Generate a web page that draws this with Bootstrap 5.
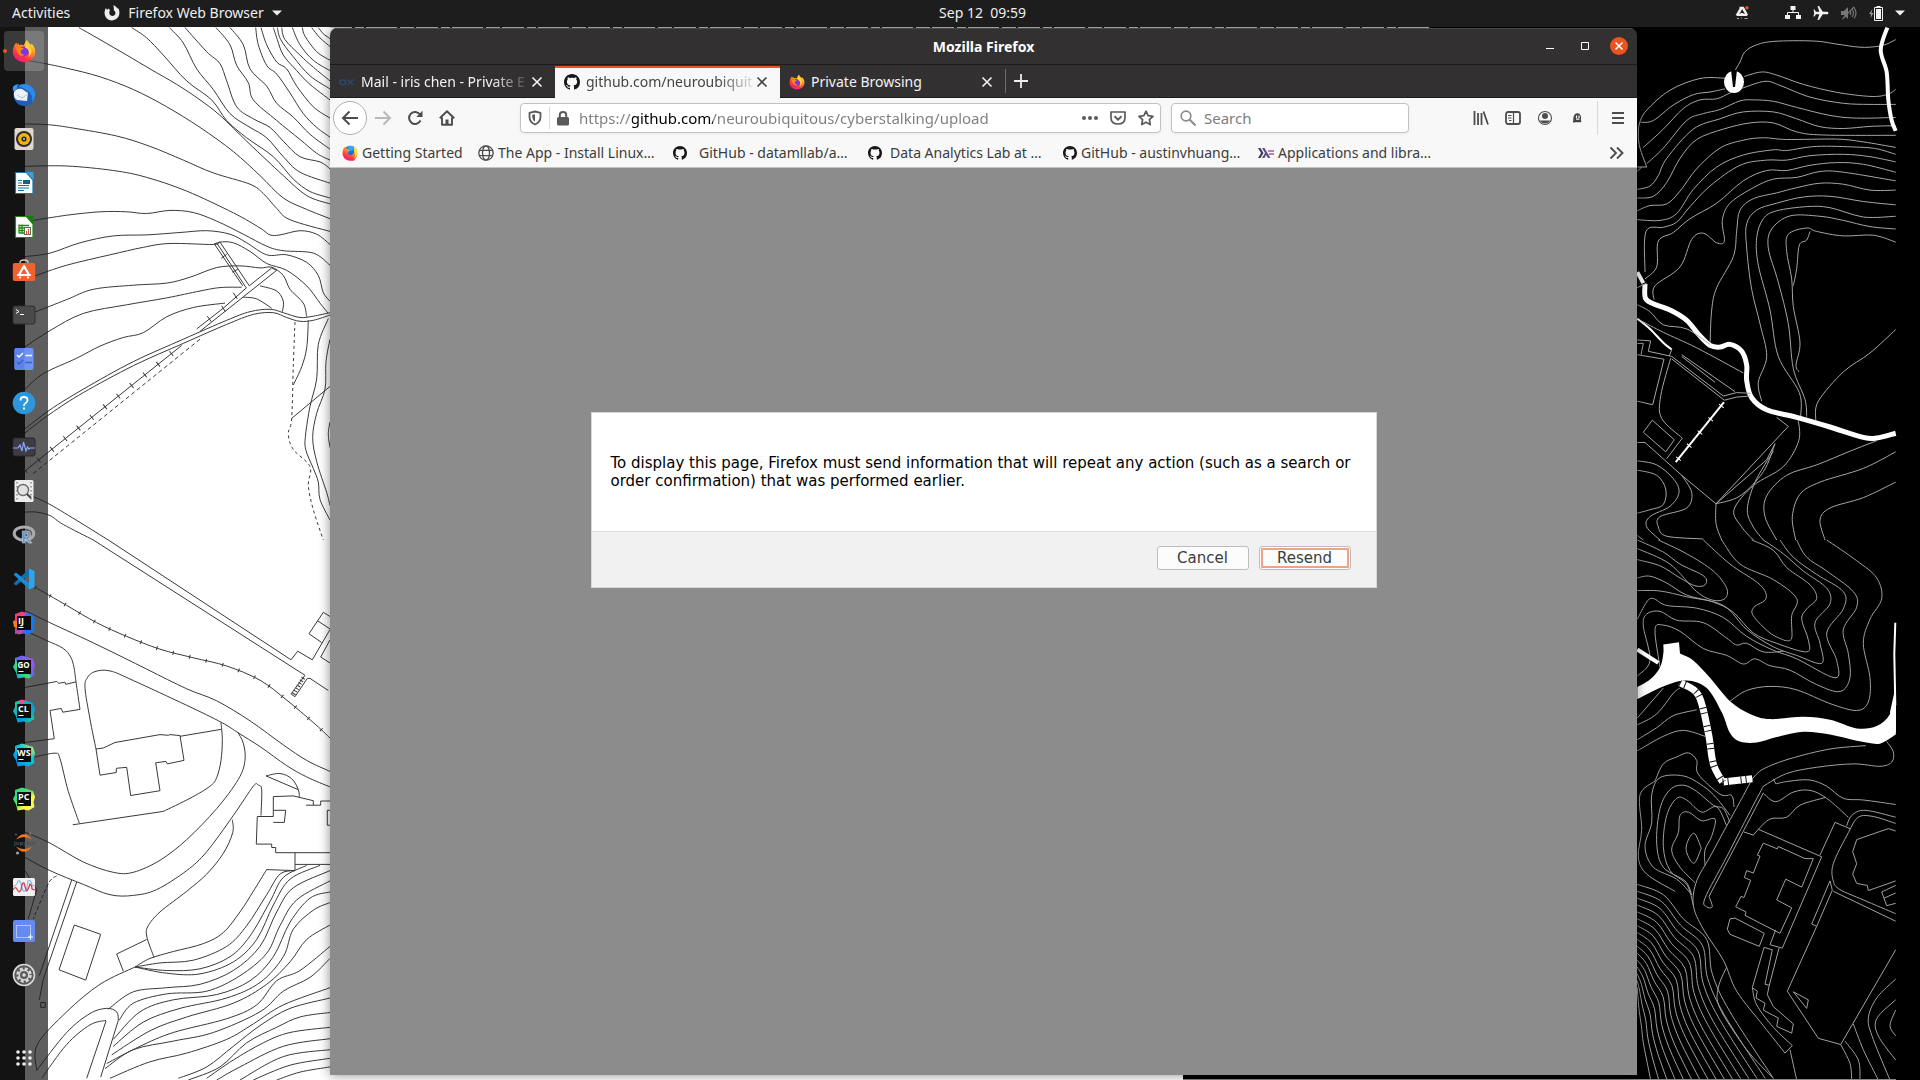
<!DOCTYPE html>
<html lang="en">
<head>
<meta charset="utf-8">
<meta name="viewport" content="width=device-width, initial-scale=1">
<title>Mozilla Firefox</title>
<link href="https://cdn.jsdelivr.net/npm/bootstrap@5.3.0/dist/css/bootstrap.min.css" rel="stylesheet">
<style>
:root{--ui:"Noto Sans","Open Sans",sans-serif}
body{font-family:var(--ui);font-size:14px;line-height:20px;background:#000;overflow:hidden}
button{font:inherit;color:inherit;border:0;background:none;padding:0}
svg{display:block;flex:none}
.wallpaper{inset:0;width:100%;height:100%}
.topbar{height:27px;background:#1d1d1d;color:#eee;z-index:2;padding-bottom:2px}
.topbar .side{flex:1 1 0}
.topbar .menus{padding-left:12px;gap:34px}
.topbar .clock{padding-left:48px}
.topbar .tray{gap:12px;padding-right:15px}
.dock{width:48px;background:rgba(27,27,27,.706);padding-top:2px}
.dock button{width:40px;height:40px;margin:2px 4px;border-radius:4px}
.dock svg{overflow:visible}
.dock .running{background:rgba(255,255,255,.17)}
.dock .running::before{content:"";position:absolute;left:-1px;top:18px;width:4px;height:4px;border-radius:50%;background:#e95420}
.win{margin:1px 283px 5px 282px;border-radius:7px 7px 0 0;box-shadow:0 0 12px rgba(0,0,0,.45);overflow:hidden;min-width:0}
.titlebar{height:37px;background:#333031;color:#fff;border-top:1px solid #4a4848;border-bottom:1px solid #1c1b1b}
.titlebar .caption{line-height:36px}
.titlebar .controls{right:9px;top:8px;gap:13px}
.tabstrip{height:33px;background:#333031;color:#f3f3f3}
.tab-item{width:225px;padding:1px 12px 0 9px;border-bottom:1px solid #1c1b1b}
.tab-item .label-text{white-space:nowrap;margin-left:6px}
.tab-item .fading{-webkit-mask-image:linear-gradient(90deg,#000 80%,rgba(0,0,0,.15));mask-image:linear-gradient(90deg,#000 80%,rgba(0,0,0,.15))}
.tab-item.current{background:#f8f8f8;color:#444;border-top:2px solid #e95420;border-bottom:0;padding-top:0;padding-bottom:2px;margin-top:1px}
.tab-rest{border-bottom:1px solid #1c1b1b}
.tab-rest .bar-sep{width:1px;height:24px;background:#6d6b6b}
.tab-rest button{margin-left:7px}
.toolbar{height:40px;background:#f8f8f8;color:#4d4d4d;padding:0 3px}
.tool{width:32px;height:32px;display:flex;align-items:center;justify-content:center}
.tool.back{width:34px;height:34px;border:1px solid #b0b0b0;border-radius:50%;background:#fff}
.field{height:30px;background:#fff;border:1px solid #c2c2c2;border-radius:4px;box-shadow:0 1px 3px rgba(0,0,0,.06)}
.field input{border:0;outline:0;padding:0;min-width:0;font-size:15px;line-height:24px;background-color:transparent}
.urlfield{margin-left:57px;padding:0 6px}
.urlfield input{margin-left:9px;color:transparent;background-image:linear-gradient(90deg,#7d7d7d 53px,#000 53px,#000 134px,#7d7d7d 134px);-webkit-background-clip:text;background-clip:text}
.searchfield{width:238px;margin:0 56px 0 10px;padding:0 8px}
.searchfield input::placeholder{color:#7d7d7d;opacity:1}
.tool-sep{width:1px;height:34px;background:#d8d8d8}
.urlfield .tool-sep{height:22px;margin:0 6px}
.bookmarks{height:30px;background:#f8f8f8;border-bottom:1px solid #c4c4c4;padding:0 12px}
.bookmarks a{width:195px;color:#3c3c3c;text-decoration:none;white-space:nowrap}
.bookmarks a.first-bm{width:136px}
.viewport{background:#8c8c8c}
.prompt{width:786px;margin-top:244px;background:#fff;border:1px solid #d5d8d5;font-family:"DejaVu Sans",sans-serif;font-size:15px;line-height:18px;color:#000}
.prompt p{padding:41px 19px;margin:0;border-bottom:1px solid #e2e2e2}
.prompt .actions{background:#f1f1f1;padding:14px 25px 17px;gap:10px}
.prompt button{width:92px;height:24px;border:1px solid #bdbdbd;border-radius:3px;background:#fcfcfc;color:#3c3c3c}
.prompt button.chosen{box-shadow:inset 0 0 0 1px #fff,inset 0 0 0 3px #f2a284}
svg text{font-family:"Open Sans",sans-serif;font-weight:700}
</style>
<script src="https://cdn.jsdelivr.net/npm/bootstrap@5.3.0/dist/js/bootstrap.bundle.min.js"></script>
</head>
<body class="vh-100 d-flex flex-column position-relative">

<svg width="0" height="0" class="position-absolute" aria-hidden="true">
<defs>
<linearGradient id="fxA" x1="0.8" y1="0" x2="0.2" y2="1"><stop offset="0" stop-color="#fff44f"/><stop offset=".35" stop-color="#ff9a1f"/><stop offset=".7" stop-color="#ff3647"/><stop offset="1" stop-color="#e31587"/></linearGradient>
<radialGradient id="fxB"><stop offset="0" stop-color="#6a3df5"/><stop offset="1" stop-color="#8b2fd6"/></radialGradient>
<linearGradient id="jbIJ" x1="0" y1="0" x2="1" y2=".2"><stop offset="0" stop-color="#fe315d"/><stop offset=".5" stop-color="#f0418c"/><stop offset=".62" stop-color="#3a6cf0"/><stop offset="1" stop-color="#087cfa"/></linearGradient>
<linearGradient id="jbGO" x1="0" y1="1" x2="1" y2="0"><stop offset="0" stop-color="#078efc"/><stop offset=".4" stop-color="#3bea62"/><stop offset=".5" stop-color="#5a6cf8"/><stop offset="1" stop-color="#b74af7"/></linearGradient>
<linearGradient id="jbCL" x1="0" y1="0" x2="1" y2="1"><stop offset="0" stop-color="#21d789"/><stop offset=".6" stop-color="#009ae5"/><stop offset="1" stop-color="#21d789"/></linearGradient>
<linearGradient id="jbWS" x1="0" y1="1" x2="1" y2="0"><stop offset="0" stop-color="#087cfa"/><stop offset=".6" stop-color="#00cdd7"/><stop offset="1" stop-color="#fcf84a"/></linearGradient>
<linearGradient id="jbPC" x1="0" y1="0" x2="1" y2="1"><stop offset="0" stop-color="#21d789"/><stop offset=".5" stop-color="#5be06a"/><stop offset=".65" stop-color="#fcf84a"/><stop offset="1" stop-color="#fcf84a"/></linearGradient>
<symbol id="firefox" viewBox="0 0 24 24"><path fill="url(#fxA)" d="M12 23.2C5.600 23.200.8 18.500.8 12.600.8 8.800 2.400 5.800 4.300 3.600L5.100 6.100 6 3.900 7.500 6.300C8.800 5.700 10.500 5.700 11.500 6.400 12.800 4.600 13.400 2.600 15 .8 15.400 3 17.600 4.400 19 6L19.700 4.800C22 7 23.200 9.800 23.200 12.800 23 18.800 18.200 23.200 12 23.200z"/><circle cx="11.800" cy="12.400" r="5" fill="url(#fxB)"/><path fill="#ff8a16" d="M4.500 8.500C7 7.500 9.500 8.800 11.800 9.200 11 10.800 9 10.400 8.600 12 8.400 14.400 10.500 16 13 15.600 10 18.500 4.500 16 4.500 8.500z"/><path fill="#ffd43a" d="M14.500 3C16 6 19.500 8 19.500 12.500 19.500 15 18 17 16.500 18 18 14 17 10 13 8.500z"/></symbol>
<symbol id="firefox-old" viewBox="0 0 24 24"><circle cx="12.500" cy="11" r="10" fill="#1c6fd8"/><path fill="#2fa8f5" d="M8 2.500Q14-.5 19 4l-4 5-6-2z"/><path fill="url(#fxA)" d="M12 23.500C5.500 23.500.8 18.500.8 12.500.8 8 2 4.500 4 2.500L5 5.500Q8 5 9.500 7L12.500 8 9.500 10.500Q8 13 10.500 14.800 13.500 16.500 16.500 14 18.500 12 18 8.500 19 5 17.500 2.500 23.500 6 23.200 12.800 22.800 19 18 23.500 12 23.500z"/><path fill="#ffe23a" d="M17.500 2.500Q24 7 22.800 14 21.500 18 18.500 19.500 21 13 18 8.500 19 5 17.500 2.500z"/></symbol>
<symbol id="github" viewBox="0 0 16 16"><path fill="#191717" d="M8 0C3.58 0 0 3.58 0 8c0 3.540 2.290 6.530 5.470 7.590.4.070.55-.170.55-.380 0-.190-.010-.820-.010-1.490-2.010.370-2.530-.490-2.690-.940-.090-.230-.480-.940-.820-1.130-.280-.150-.680-.520-.010-.530.630-.010 1.080.580 1.230.820.720 1.210 1.870.870 2.330.660.070-.520.280-.870.510-1.070-1.780-.2-3.640-.890-3.640-3.950 0-.870.310-1.590.820-2.150-.080-.2-.360-1.020.080-2.120 0 0 .670-.210 2.200.820.640-.180 1.320-.270 2-.270s1.360.090 2 .270c1.530-1.040 2.200-.820 2.200-.820.440 1.100.160 1.920.080 2.120.510.560.820 1.270.820 2.150 0 3.070-1.870 3.750-3.650 3.950.290.250.540.730.540 1.480 0 1.070-.010 1.930-.010 2.200 0 .210.150.460.550.380A8.010 8.010 0 0 0 16 8c0-4.420-3.580-8-8-8z"/></symbol>
<symbol id="cross" viewBox="0 0 12 12"><path d="M1.500 1.500l9 9M10.500 1.500l-9 9" stroke="currentColor" stroke-width="1.600" fill="none"/></symbol>
<symbol id="jbshape" viewBox="0 0 24 24"><path d="M3 3l7-2.500 5 1.500 6 2 2 6-1.500 5 1 5-6 3.500-5-1-6 1-1.500-6L1 12l2-4z"/></symbol>
</defs>
</svg>

<svg class="wallpaper position-absolute" viewBox="0 0 1920 1080" preserveAspectRatio="xMinYMin slice" aria-hidden="true">
<rect width="1920" height="1080" fill="#000"/>
<path d="M25 27H1400V500H1183V1080H25z" fill="#fff"/>
<g id="map" fill="none"></g>
<path d="M330 27.500H1430" stroke="#222"/>
<path d="M330 27.500H1430" stroke="#c8c8c8" stroke-dasharray="22 3 9 2 31 3 14 2"/>
<path d="M1183 1079.500H1896" stroke="#888"/>
</svg>

<header class="topbar d-flex align-items-center position-relative flex-shrink-0">
  <div class="side menus d-flex align-items-center">
    <button>Activities</button>
    <button class="d-flex align-items-center">
      <svg width="16" height="16" viewBox="0 0 16 16"><path fill="#eee" d="M2 3L3 5 4.500 3.500 6 5C5 6.500 5 9 6.500 10.200 8 11.500 10.500 11 11.300 9 11.800 7.500 11 6 10 5.500L9.500 0C11 .8 12.500 2 13.500 3.500L14.500 3.500C16 7 15.800 11 12.800 13.600 9.500 16.300 4.500 16 2 12.500 0 9.500.2 5.800 2 3z"/></svg>
      <span class="ms-2">Firefox Web Browser</span>
      <svg class="ms-2" width="10" height="6" viewBox="0 0 10 6"><path fill="#eee" d="M0 .5h10L5 5.500z"/></svg>
    </button>
  </div>
  <button class="clock">Sep 12&nbsp; 09:59</button>
  <div class="side tray d-flex align-items-center justify-content-end">
    <svg class="me-4" width="14" height="14" viewBox="0 0 14 14"><path d="M4.500 2h3.500l3.500 6.500M6 2.500L2 9.500" stroke="#eee" stroke-width="2.600" fill="none"/><path d="M.5 8h4l1.500-1h2l1 1h4l-1 2H2z" fill="#eee"/><path d="M2 12.500h2M6 12h1M9.500 12.500h3" stroke="#aaa"/><circle cx="12" cy="1.800" r="1.700" fill="#e95420"/></svg>
    <svg width="16" height="14" viewBox="0 0 16 14"><g fill="#f2f2f2"><rect x="5.500" y="0" width="5" height="4"/><rect x="0" y="9" width="5" height="4"/><rect x="11" y="9" width="5" height="4"/></g><path d="M8 4v3M2.500 9V6.500h11V9" stroke="#f2f2f2" fill="none"/></svg>
    <svg width="16" height="16" viewBox="0 0 16 16"><path fill="#f2f2f2" d="M15.500 8c0-.8-1-1.300-2-1.300H9.800L6 1H4.500l1.800 5.700H3L1.500 4.500H.5L1.200 8 .5 11.500h1L3 9.300h3.300L4.500 15H6l3.800-5.700h3.700c1 0 2-.5 2-1.300z"/></svg>
    <svg width="16" height="14" viewBox="0 0 16 14"><path fill="#777" d="M0 5h3l4-4v12L3 9H0z"/><path d="M9 5q1.500 2 0 4M11 3q3 4 0 8M13 1.500q4 5.500 0 11M1.500 13L13 .8" stroke="#777" stroke-width="1.200" fill="none"/></svg>
    <svg width="14" height="16" viewBox="0 0 14 16"><path fill="#999" d="M3.500 4L0 9h2l-.5 4L4.500 8h-2z"/><path d="M5.500 2.500h8v13h-8z" fill="none" stroke="#f2f2f2"/><path fill="#f2f2f2" d="M7.500 1h4v1h-4zM7 4h5v10H7z"/></svg>
    <svg width="10" height="6" viewBox="0 0 10 6"><path fill="#f2f2f2" d="M0 .5h10L5 5.500z"/></svg>
  </div>
</header>

<main class="d-flex flex-grow-1 position-relative">
  <nav class="dock d-flex flex-column flex-shrink-0" aria-label="Dock" id="dock">
    <button class="running position-relative d-flex align-items-center justify-content-center" aria-label="Firefox"><svg width="24" height="24"><use href="#firefox"/></svg></button>
    <button class="d-flex align-items-center justify-content-center" aria-label="Thunderbird"><svg width="24" height="24" viewBox="0 0 24 24"><circle cx="12.500" cy="12" r="11" fill="#1f5fb8"/><path d="M6 3Q14-2 21 5 26 12 20 20 22 12 16 8 10 4 6 3z" fill="#2f8be8"/><path d="M2 9Q5 5 10 6L16 10 15 18 5 17Q1 14 2 9z" fill="#eef2f7"/><path d="M5 12l5 3 6-4" stroke="#b9c3cf" fill="none"/><path d="M1 8Q-1 2 7 1 4 4 5 7z" fill="#3d9bea"/></svg></button>
    <button class="d-flex align-items-center justify-content-center" aria-label="Rhythmbox"><svg width="24" height="24" viewBox="0 0 24 24"><rect x="2.500" y="1" width="19" height="22" rx="2" fill="#e0d8cf"/><circle cx="12" cy="12" r="8" fill="#2a2a2a"/><circle cx="12" cy="12" r="6" fill="#f2b211"/><circle cx="12" cy="12" r="2.600" fill="#2a2a2a"/><circle cx="12" cy="12" r="1" fill="#ccc"/></svg></button>
    <button class="d-flex align-items-center justify-content-center" aria-label="Writer"><svg width="24" height="24" viewBox="0 0 24 24"><path d="M3.500 1.500h11L21 9v13.500H3.500z" fill="#fff" stroke="#1278ad" stroke-width="1.200"/><path d="M14.500 1h7v8z" fill="#3aa0dc"/><path d="M6 9.500h4M6 12h4M6 14.500h11M6 17h11M6 19.500h6" stroke="#1278ad" stroke-width="1.200"/><rect x="11" y="9" width="7" height="4" fill="#1b5e86"/></svg></button>
    <button class="d-flex align-items-center justify-content-center" aria-label="Calc"><svg width="24" height="24" viewBox="0 0 24 24"><path d="M3.500 1.500h11L21 9v13.500H3.500z" fill="#fff" stroke="#1c8a10" stroke-width="1.200"/><path d="M14.500 1h7v8z" fill="#167a0b"/><path d="M7 10.500h10M7 13h6M7 15.500h6M7 18h6M7 9.500v9M10 9.500v9" stroke="#1c8a10" stroke-width="1.300"/><rect x="12.500" y="12.500" width="6" height="7" fill="#fff" stroke="#666"/><path d="M14.500 19v-3M16.500 19v-5" stroke="#c53"/></svg></button>
    <button class="d-flex align-items-center justify-content-center" aria-label="Software"><svg width="24" height="24" viewBox="0 0 24 24"><path d="M8 5V3.500Q8 1 12 1t4 2.500V5" stroke="#e0c8b8" fill="none" stroke-width="1.300"/><rect x=".8" y="4" width="22.400" height="18" rx="2" fill="#ef6230"/><path d="M12 7L7.500 15M12 7l4.500 8M6 16h12M8 18.500h0M16 18.500h0" stroke="#fff" stroke-width="2.200" stroke-linecap="round" fill="none"/></svg></button>
    <button class="d-flex align-items-center justify-content-center" aria-label="Terminal"><svg width="24" height="24" viewBox="0 0 24 24"><rect x="1" y="3" width="22" height="18" rx="2" fill="#4a4a4a" stroke="#2e2e2e"/><path d="M4 6.500l3 2-3 2M8 11.500h4" stroke="#fff" fill="none"/></svg></button>
    <button class="d-flex align-items-center justify-content-center" aria-label="To Do"><svg width="24" height="24" viewBox="0 0 24 24"><rect x="2.500" y="1" width="19" height="22" rx="2" fill="#6f93f5"/><path d="M2.500 12V3q0-2 2-2h8v22h-8q-2 0-2-2z" fill="#5d82ee"/><path d="M5 8l2 2 4-4M13.500 8.500H20" stroke="#fff" stroke-width="1.400" fill="none"/><path d="M5 15l2 2 4-4M13.500 15.500H20" stroke="#3d5fb5" stroke-width="1.400" fill="none"/></svg></button>
    <button class="d-flex align-items-center justify-content-center" aria-label="Help"><svg width="24" height="24" viewBox="0 0 24 24"><circle cx="12" cy="12" r="11.300" fill="#2e97dc"/><path d="M8.500 9.500Q8.500 6 12 6t3.500 3.300Q15.500 11 13.500 12.200 12 13 12 15M12 16.500v2" stroke="#fff" stroke-width="1.800" fill="none"/></svg></button>
    <button class="d-flex align-items-center justify-content-center" aria-label="System Monitor"><svg width="24" height="24" viewBox="0 0 24 24"><rect x="1" y="3" width="22" height="18" rx="2" fill="#3c3d42" stroke="#26272b"/><path d="M1 13h5l2-3 2 6 1.500-9 2.500 9 1.500-4 1.500 2 1-1h5" stroke="#8fa7f5" stroke-width="1.200" fill="none"/></svg></button>
    <button class="d-flex align-items-center justify-content-center" aria-label="Document Viewer"><svg width="24" height="24" viewBox="0 0 24 24"><rect x="2.500" y="1" width="19" height="22" rx="1.500" fill="#ececec"/><path d="M5 3v18M19 3v18" stroke="#888" stroke-width="1.500" stroke-dasharray="1.500 2.500"/><circle cx="11" cy="11" r="5.500" fill="#e2e2e2" stroke="#6b6b6b" stroke-width="1.400"/><path d="M15 15l4 4" stroke="#444" stroke-width="2"/></svg></button>
    <button class="d-flex align-items-center justify-content-center" aria-label="R"><svg width="24" height="24" viewBox="0 0 24 24"><ellipse cx="12" cy="10.500" rx="9.800" ry="6.600" fill="none" stroke="#a9abae" stroke-width="3"/><text x="9" y="20" font-size="16" fill="#6688b8" stroke="#d5dbe5" stroke-width=".6">R</text></svg></button>
    <button class="d-flex align-items-center justify-content-center" aria-label="Visual Studio Code"><svg width="24" height="24" viewBox="0 0 24 24"><path d="M17 1.500l5.500 2.500v16L17 22.500z" fill="#2aa5f0"/><path d="M1.500 16.500L17 2v6L4 18.500z" fill="#0f6fb5"/><path d="M1.500 7.500L17 22v-6L4 5.500z" fill="#1a8ad6"/></svg></button>
    <button class="d-flex align-items-center justify-content-center" aria-label="IntelliJ IDEA"><svg width="24" height="24" viewBox="0 0 24 24"><use href="#jbshape" width="24" height="24" fill="url(#jbIJ)"/><path d="M1 10l4 0v7l-3-1z" fill="#f97a12"/><path d="M3 17h5v5l-5 1z" fill="#a0539a"/><rect x="5" y="5" width="14" height="14" fill="#0b0b0b"/><text x="6" y="13" font-size="9" fill="#fff">IJ</text><path d="M6.500 16.500h5" stroke="#fff"/></svg></button>
    <button class="d-flex align-items-center justify-content-center" aria-label="GoLand"><svg width="24" height="24" viewBox="0 0 24 24"><use href="#jbshape" width="24" height="24" fill="url(#jbGO)"/><rect x="5" y="5" width="14" height="14" fill="#0b0b0b"/><text x="5.500" y="13" font-size="8" fill="#fff">GO</text><path d="M6.500 16.500h5" stroke="#fff"/></svg></button>
    <button class="d-flex align-items-center justify-content-center" aria-label="CLion"><svg width="24" height="24" viewBox="0 0 24 24"><use href="#jbshape" width="24" height="24" fill="url(#jbCL)"/><path d="M8 1l5 0-2 4H8z" fill="#e0548f"/><rect x="5" y="5" width="14" height="14" fill="#0b0b0b"/><text x="6" y="13" font-size="9" fill="#fff">CL</text><path d="M6.500 16.500h5" stroke="#fff"/></svg></button>
    <button class="d-flex align-items-center justify-content-center" aria-label="WebStorm"><svg width="24" height="24" viewBox="0 0 24 24"><use href="#jbshape" width="24" height="24" fill="url(#jbWS)"/><rect x="5" y="5" width="14" height="14" fill="#0b0b0b"/><text x="5" y="13" font-size="9" fill="#fff">WS</text><path d="M6.500 16.500h5" stroke="#fff"/></svg></button>
    <button class="d-flex align-items-center justify-content-center" aria-label="PyCharm"><svg width="24" height="24" viewBox="0 0 24 24"><use href="#jbshape" width="24" height="24" fill="url(#jbPC)"/><rect x="5" y="5" width="14" height="14" fill="#0b0b0b"/><text x="6" y="13" font-size="9" fill="#fff">PC</text><path d="M6.500 16.500h5" stroke="#fff"/></svg></button>
    <button class="d-flex align-items-center justify-content-center" aria-label="Jupyter"><svg width="24" height="24" viewBox="0 0 24 24"><path d="M4 8.500Q12-2 20 8.500 12 3.500 4 8.500zM4 15.500Q12 26 20 15.500 12 20.500 4 15.500z" fill="#f37726"/><text x="2" y="14" font-size="6" fill="#4e4e4e">jupyter</text><circle cx="5.500" cy="22" r="1.600" fill="#9e9e9e"/><circle cx="18.500" cy="2.500" r="1.200" fill="#767677"/><circle cx="4" cy="3.500" r=".9" fill="#616262"/></svg></button>
    <button class="d-flex align-items-center justify-content-center" aria-label="Plotter"><svg width="24" height="24" viewBox="0 0 24 24"><rect x="1" y="3" width="22" height="18" rx="1.500" fill="#f0f0f0"/><path d="M1 11q4 0 5-5 2-1 3 3 2 9 4 7 2-2 3-10 3-2 4 4l3 1" stroke="#85b8e0" stroke-width="1.200" fill="none"/><path d="M1 15q2-4 4-1 2 5 4 1 1-8 3-7 2 8 3 8 2-3 3-7 2 1 2 5l3 1" stroke="#d0344e" stroke-width="1.200" fill="none"/></svg></button>
    <button class="d-flex align-items-center justify-content-center" aria-label="Screenshot"><svg width="24" height="24" viewBox="0 0 24 24"><rect x="1" y="1" width="22" height="22" rx="2" fill="#668bf0"/><path d="M4.500 6.500h14v12h-14z" fill="none" stroke="#fff" stroke-dasharray="1 1"/><path d="M18.500 15.500v5M16 18h5" stroke="#fff" stroke-width="1.200"/></svg></button>
    <button class="d-flex align-items-center justify-content-center" aria-label="Settings"><svg width="24" height="24" viewBox="0 0 24 24"><circle cx="12" cy="12" r="10.500" fill="#5c5c5c" stroke="#d8d8d8" stroke-width="1.600"/><circle cx="12" cy="12" r="6.500" fill="none" stroke="#d8d8d8" stroke-width="2.500" stroke-dasharray="3 2.100"/><circle cx="12" cy="12" r="4.800" fill="none" stroke="#d8d8d8" stroke-width="1.500"/><circle cx="12" cy="12" r="1.800" fill="#d8d8d8"/></svg></button>
    <button class="d-flex align-items-center justify-content-center mt-auto" aria-label="Show Applications"><svg width="16" height="16" viewBox="0 0 16 16"><g fill="#eee"><circle cx="2" cy="2" r="1.800"/><circle cx="8" cy="2" r="1.800"/><circle cx="14" cy="2" r="1.800"/><circle cx="2" cy="8" r="1.800"/><circle cx="8" cy="8" r="1.800"/><circle cx="14" cy="8" r="1.800"/><circle cx="2" cy="14" r="1.800"/><circle cx="8" cy="14" r="1.800"/><circle cx="14" cy="14" r="1.800"/></g></svg></button>
  </nav>

  <section class="win d-flex flex-column flex-grow-1">
    <div class="titlebar position-relative text-center flex-shrink-0">
      <div class="caption fw-bold">Mozilla Firefox</div>
      <div class="controls position-absolute d-flex">
        <button aria-label="Minimize"><svg width="22" height="18" viewBox="0 0 22 18"><path d="M6 11.500h8" stroke="#fff"/></svg></button>
        <button aria-label="Maximize"><svg width="22" height="18" viewBox="0 0 22 18"><path d="M6.500 5.500h7v7h-7z" stroke="#fff" fill="none"/></svg></button>
        <button aria-label="Close"><svg width="18" height="18" viewBox="0 0 18 18"><circle cx="9" cy="9" r="9" fill="#e95420"/><path d="M5.500 5.500l7 7M12.500 5.500l-7 7" stroke="#fff" stroke-width="1.500"/></svg></button>
      </div>
    </div>

    <div class="tabstrip d-flex flex-shrink-0">
      <div class="tab-item d-flex align-items-center justify-content-between">
        <svg width="16" height="16" viewBox="0 0 16 16"><rect x="1" y="6" width="5.500" height="4.500" rx="1.500" fill="none" stroke="#284b73" stroke-width="1.400"/><path d="M8.500 5.500l6 5.500M14.500 5.500l-6 5.500" stroke="#284b73" stroke-width="1.400"/></svg>
        <span class="label-text fading me-auto">Mail - iris chen - Private E</span>
        <button aria-label="Close tab"><svg width="12" height="12"><use href="#cross"/></svg></button>
      </div>
      <div class="tab-item current d-flex align-items-center justify-content-between">
        <svg width="16" height="16"><use href="#github"/></svg>
        <span class="label-text fading me-auto">github.com/neuroubiquit</span>
        <button aria-label="Close tab"><svg width="12" height="12"><use href="#cross"/></svg></button>
      </div>
      <div class="tab-item d-flex align-items-center justify-content-between">
        <svg width="16" height="16"><use href="#firefox"/></svg>
        <span class="label-text me-auto">Private Browsing</span>
        <button aria-label="Close tab"><svg width="12" height="12"><use href="#cross"/></svg></button>
      </div>
      <div class="tab-rest d-flex align-items-center flex-grow-1">
        <span class="bar-sep"></span>
        <button aria-label="New tab"><svg width="16" height="16" viewBox="0 0 16 16"><path d="M8 1v14M1 8h14" stroke="#eee" stroke-width="1.800"/></svg></button>
      </div>
    </div>

    <div class="toolbar d-flex align-items-center flex-shrink-0">
      <button class="tool back" aria-label="Back"><svg width="18" height="16" viewBox="0 0 18 16"><path d="M17 8H2.500M8.500 1.500L2 8l6.500 6.500" stroke="currentColor" stroke-width="2" fill="none"/></svg></button>
      <button class="tool" aria-label="Forward"><svg width="18" height="16" viewBox="0 0 18 16"><path d="M1 8h14.500M9.500 1.500L16 8l-6.500 6.500" stroke="#b8b8b8" stroke-width="2" fill="none"/></svg></button>
      <button class="tool" aria-label="Reload"><svg width="16" height="16" viewBox="0 0 16 16"><path d="M13.500 10.500A6 6 0 1 1 13 4.500" stroke="currentColor" stroke-width="2" fill="none"/><path d="M15.500.8v6.200H9.300z" fill="currentColor"/></svg></button>
      <button class="tool" aria-label="Home"><svg width="16" height="16" viewBox="0 0 16 16"><path d="M.8 8.300L8 1.200l7.200 7.100M3 7.500V14.800h10V7.500" stroke="currentColor" stroke-width="1.900" fill="none" stroke-linejoin="round"/><path d="M6.500 15V9.500h3V15z" fill="currentColor"/></svg></button>
      <div class="field urlfield d-flex align-items-center flex-grow-1">
        <svg width="16" height="16" viewBox="0 0 16 16"><path d="M8 1.500L2.500 2.800V7q0 5 5.500 7.500Q13.500 12 13.500 7V2.800z" stroke="#5a5a5a" stroke-width="1.800" fill="none" stroke-linejoin="round"/><path d="M8 4.200v7.500Q5.500 10 5.200 7V4.800z" fill="#5a5a5a"/></svg>
        <span class="tool-sep"></span>
        <svg width="14" height="16" viewBox="0 0 14 16"><rect x="1" y="7" width="12" height="8.500" rx="1.500" fill="#5a5a5a"/><path d="M3.800 8V5q0-3 3.200-3t3.200 3v3" stroke="#5a5a5a" stroke-width="2" fill="none"/></svg>
        <input class="flex-grow-1" type="text" aria-label="Address" value="https://github.com/neuroubiquitous/cyberstalking/upload">
        <button aria-label="Page actions"><svg width="16" height="16" viewBox="0 0 16 16"><g fill="#5a5a5a"><circle cx="2" cy="8" r="2"/><circle cx="8" cy="8" r="2"/><circle cx="14" cy="8" r="2"/></g></svg></button>
        <button class="mx-2 px-1" aria-label="Pocket"><svg width="16" height="16" viewBox="0 0 16 16"><path d="M1 2h14v5.500Q15 14 8 14T1 7.500z" stroke="#5a5a5a" stroke-width="1.700" fill="none" stroke-linejoin="round"/><path d="M4.500 6.300L8 9.600l3.500-3.300" stroke="#5a5a5a" stroke-width="1.900" fill="none"/></svg></button>
        <button aria-label="Bookmark"><svg width="16" height="16" viewBox="0 0 16 16"><path d="M8 1.200l2.100 4.500 4.900.6-3.600 3.400.9 4.900L8 12.200l-4.300 2.400.9-4.900L1 6.300l4.900-.6z" stroke="#5a5a5a" stroke-width="1.700" fill="none" stroke-linejoin="round"/></svg></button>
      </div>
      <div class="field searchfield d-flex align-items-center">
        <svg width="16" height="16" viewBox="0 0 16 16"><circle cx="6" cy="6" r="4.800" stroke="#8a8a8a" stroke-width="1.700" fill="none"/><path d="M9.500 9.500l6 6" stroke="#8a8a8a" stroke-width="2"/></svg>
        <input class="flex-grow-1 ms-2" type="text" placeholder="Search" aria-label="Search">
      </div>
      <button class="tool" aria-label="Library"><svg width="16" height="16" viewBox="0 0 16 16"><path d="M1.500 1v14M5 3v12M8.500 3v12M10.500 1.500l4.500 13" stroke="currentColor" stroke-width="1.800"/></svg></button>
      <button class="tool" aria-label="Sidebars"><svg width="16" height="16" viewBox="0 0 16 16"><rect x="1" y="2" width="14" height="12" rx="2" stroke="currentColor" stroke-width="1.800" fill="none"/><path d="M8.500 2v12M3 5.500h3.500M3 8h3.500M4 10.500h2.500" stroke="currentColor" stroke-width="1.200"/></svg></button>
      <button class="tool" aria-label="Account"><svg width="16" height="16" viewBox="0 0 16 16"><circle cx="8" cy="8" r="6.500" stroke="currentColor" stroke-width="1.100" fill="none"/><circle cx="8" cy="6" r="3" fill="currentColor"/><path d="M3 10.500h10Q11.500 13.500 8 13.500T3 10.500z" fill="currentColor"/></svg></button>
      <button class="tool" aria-label="Ghostery"><svg width="16" height="16" viewBox="0 0 16 16"><path d="M4 12.500L4.500 7Q5.500 3 8.500 3.200T12 7l.2 5.500-2-.6-1.500.6-1.500-.6-1.500.6z" fill="#444"/><path d="M7.500 5.500v2.500M10 5.500v2.500M7 9.200h3.500" stroke="#f8f8f8" stroke-width="1.200"/></svg></button>
      <span class="tool-sep ms-1 me-1"></span>
      <button class="tool" aria-label="Menu"><svg width="12" height="14" viewBox="0 0 12 14"><path d="M0 2h12M0 7h12M0 12h12" stroke="currentColor" stroke-width="2"/></svg></button>
    </div>

    <div class="bookmarks d-flex align-items-center flex-shrink-0">
      <a class="first-bm d-flex align-items-center" href="#"><svg width="16" height="16"><use href="#firefox-old"/></svg><span class="ms-1">Getting Started</span></a>
      <a class="d-flex align-items-center" href="#"><svg width="16" height="16" viewBox="0 0 16 16"><g stroke="#4d4d4d" stroke-width="1.300" fill="none"><circle cx="8" cy="8" r="7.200"/><ellipse cx="8" cy="8" rx="3.500" ry="7.200"/><path d="M1.500 5.300h13M1.500 10.700h13"/></g></svg><span class="ms-1">The App - Install Linux…</span></a>
      <a class="d-flex align-items-center" href="#"><svg width="14" height="14"><use href="#github"/></svg><span class="ms-2 ps-1">GitHub - datamllab/a…</span></a>
      <a class="d-flex align-items-center" href="#"><svg width="14" height="14"><use href="#github"/></svg><span class="ms-2">Data Analytics Lab at …</span></a>
      <a class="d-flex align-items-center" href="#"><svg width="14" height="14"><use href="#github"/></svg><span class="ms-1">GitHub - austinvhuang…</span></a>
      <a class="d-flex align-items-center" href="#"><svg width="16" height="12" viewBox="0 0 16 12"><path d="M0 1h2.500l3 5-3 5H0l3-5z" fill="#453a62"/><path d="M4 1h2.500l6 10H10L8 8l-1.500 3H4l3-5z" fill="#5e5086"/><path d="M10 4h6M11 7h5" stroke="#a65a9a" stroke-width="1.500"/></svg><span class="ms-1">Applications and libra…</span></a>
      <button class="ms-auto" aria-label="More bookmarks"><svg width="16" height="14" viewBox="0 0 16 14"><path d="M1.500 1.500L7 7l-5.500 5.500M8 1.500L13.500 7 8 12.500" stroke="#4d4d4d" stroke-width="1.900" fill="none"/></svg></button>
    </div>

    <div class="viewport flex-grow-1 d-flex justify-content-center align-items-start">
      <div class="prompt" role="dialog" aria-label="Resend information">
        <p>To display this page, Firefox must send information that will repeat any action (such as a search or order confirmation) that was performed earlier.</p>
        <div class="actions d-flex justify-content-end">
          <button type="button">Cancel</button>
          <button type="button" class="chosen">Resend</button>
        </div>
      </div>
    </div>
  </section>
</main>

<script>
// Contour map wallpaper. Each sheet lists its lines as points; "s" = smooth curve, "l" = straight segments.
// Optional third field: stroke width, fourth: dash pattern.
const sheets = [
 {x:0, y:0, ink:'#3a3a3a', lines:`
s|75,176 110,180 200,198 300,223 400,260 500,310 600,370 700,440 780,510 850,575 920,608 990,635
s|237,80 300,115 380,160 450,200 530,245 600,290 660,335 740,410 800,465 850,510 920,568 990,592
s|395,80 440,110 490,160 560,235 635,290 680,350 740,400 820,455 880,520 930,556 990,575
s|508,80 550,125 590,200 640,260 690,330 750,370 800,400 850,455 900,500 990,532
s|555,80 620,150 660,185 680,235 710,310 760,345 810,370 850,410 900,455 960,470 990,490
s|648,80 690,130 710,190 745,240 760,290 830,350 900,405 950,445 990,465
s|690,80 730,130 750,200 800,250 830,300 880,340 930,390 990,433
s|767,80 775,130 800,190 830,215 870,270 910,330 950,370 990,398
s|783,80 800,130 830,180 860,200 890,250 940,310 990,343
s|820,80 832,115 850,160 890,205 930,245 990,290
s|832,80 842,115 880,165 930,220 990,258
s|845,80 855,115 900,160 940,195 990,235
s|877,80 900,130 940,175 990,205
s|907,80 915,105 950,150 990,175
s|935,80 960,110 990,135
s|955,80 970,98 990,112
s|75,360 145,362 220,372 350,395 450,425 550,465 640,502 750,535 790,562 830,605 870,638 990,672
s|75,483 200,482 340,495 440,515 560,555 700,618 780,662 810,682 840,682 900,670 950,680 990,710
s|100,640 200,625 300,615 380,615 440,620 510,611 580,617 650,642 730,680 800,715 850,728 940,735 990,770
s|75,745 150,735 240,705 340,685 440,682 540,675 620,670 690,680 740,705 800,740 860,740 920,762 955,800 970,850 990,875
s|105,801 200,770 330,740 430,718 510,707 640,710 660,703 700,705 750,730 800,765 860,785 920,830 960,880 985,910
s|105,906 200,870 280,840 400,828 500,822 570,805 650,777 720,772 780,778 815,776 850,800 870,840 910,880 920,920
s|75,1007 150,960 250,910 380,885 500,865 600,845 660,835 725,834
s|780,830 830,845 850,875 847,905
s|75,1130 130,1085 230,1040 300,1005 370,980 430,966 500,920 580,893 675,880
s|730,863 770,868 815,895
s|75,1245 150,1190 250,1130 400,1050 550,985 680,930 750,905 810,898 850,908 900,922 940,918 990,908
s|75,1257 150,1202 250,1140 400,1062 550,997 680,942 760,913 820,908 860,922 900,933 940,930 990,915
l|75,1367 545,1003
l|75,1367 545,1003|6|1 16
l|100,1375 600,985|1|4 3
l|643,708 728,830
l|650,705 738,835
l|660,703 748,830 815,778 830,785 600,962
l|643,708 660,703
l|590,955 670,895 740,835
l|664,750 680,738
l|697,790 713,782
l|700,850 712,868
l|665,888 676,905
l|622,918 634,934
s|885,935 880,1060 875,1215 865,1260 880,1305 930,1355 925,1410 940,1480 970,1568|1|3 3
s|925,930 920,1010 905,1065 880,1118
s|985,925 955,1000 950,1100 930,1180 917,1260 917,1305 940,1360 955,1400 960,1450 990,1510
s|990,985 978,1050 975,1130 950,1200 938,1270 950,1340 980,1430 990,1468
l|875,1215 990,1122
s|990,1225 985,1260 990,1300
s|100,1442 150,1465 240,1517 325,1568
s|75,1487 110,1487 150,1497 190,1523 280,1568`},
 {x:0, y:540, ink:'#3a3a3a', lines:`
l|325,0 873,348 893,323 937,348 990,260
l|280,0 915,393 873,447 885,455 922,402 930,402 985,437
l|910,400 879,451|4|1 2
l|990,222 970,210 927,272 965,298
l|953,235 990,258
l|990,290 962,340 990,357
s|105,137 200,190 290,240 380,280 480,317 580,342 680,366 780,407 860,465 940,530 990,575
s|105,137 200,190 290,240 380,280 480,317 580,342 680,366 780,407 860,465 940,530 990,575|4|1 16
s|75,205 150,240 300,308 440,375 560,432 650,467 750,525 850,595 920,640 990,672
s|90,270 140,292 190,315 212,340 222,370 228,412 240,492
l|240,492 188,500 184,489 150,495 163,577 75,588
l|75,428 170,411 176,416 195,413 197,419 228,412
s|288,607 270,520 255,430 262,400 285,382 330,380 400,408 560,480 665,530 715,560 780,600 860,655 920,688 990,717
l|288,607 310,604 345,588 480,565 505,567 510,565 540,568 552,640 502,650 498,643 467,647 480,728 392,742 380,660 349,663 349,675 300,683 288,607
l|540,570 663,550
s|663,530 667,580 663,640 650,690 630,715 570,750 490,788
l|490,788 218,827
s|105,630 165,619 180,635 205,730 238,822
s|713,558 730,590 735,640 715,695 650,780 560,870 480,930 400,965 340,965 250,935 150,880 75,848
s|75,922 150,960 250,1000 330,1030 400,1032 470,1015 560,960 620,905 700,800 760,715 775,712 785,725 783,800
s|697,812 698,850 670,910 620,970 560,1020 480,1080 445,1120 440,1150 462,1212
l|772,803 820,803 820,745 880,743 940,757 940,770 962,770 962,758 990,758
l|918,770 940,770
l|772,803 769,883 815,883 815,893 827,893 827,908 990,908
l|820,785 857,785 853,820 820,820
l|885,908 885,960 800,957
l|885,942 990,942
l|990,785 982,785 982,828 990,828
s|798,685 840,678 875,693 895,725 898,748
l|798,685 895,725
s|800,957 760,1020 720,1080 670,1140 610,1172 520,1195 450,1215 405,1240
s|405,1240 480,1228 580,1220 680,1180 740,1120 800,1030 840,970 885,960
s|405,1240 500,1250 600,1245 690,1210 750,1150 810,1050 850,980 920,945
s|405,1240 500,1258 600,1260 700,1225 770,1160 820,1060 870,985 960,945
s|325,1362 400,1312 500,1300 600,1290 700,1250 780,1180 830,1080 880,1010 990,960
s|357,1395 400,1345 500,1318 620,1310 720,1265 800,1200 840,1120 890,1045 990,990
s|340,1450 420,1370 520,1335 650,1320 750,1280 820,1210 870,1110 930,1040 990,1022
s|340,1470 430,1400 540,1360 680,1330 780,1285 850,1210 880,1130 940,1075 990,1053
s|335,1495 450,1425 560,1385 700,1345 800,1290 870,1225 920,1160 990,1118
s|320,1520 420,1470 520,1430 680,1390 770,1350 830,1280 900,1250 990,1180
s|315,1535 400,1480 520,1455 640,1430 780,1370 850,1310 930,1270 990,1215
s|330,1563 450,1515 560,1490 680,1450 760,1405 850,1350 990,1300
s|535,1563 620,1530 700,1470 780,1410 870,1360 990,1330
s|565,1568 660,1530 740,1460 830,1415 900,1385 990,1372
s|620,1563 700,1510 790,1460 870,1430 990,1415
s|650,1568 720,1530 850,1470 990,1448
s|720,1568 850,1500 990,1480
s|760,1568 870,1525 990,1505
s|830,1568 900,1545 990,1530
s|110,1540 112,1465 200,1370 300,1290 405,1240
l|370,1252 350,1202 440,1160
l|223,1118 302,1145 257,1278 177,1248 223,1118
s|110,1540 200,1430 270,1375 320,1360 350,1370 355,1395
l|355,1395 302,1560
s|125,1563 200,1465 270,1408 318,1395
l|318,1397 260,1563
l|215,987 118,1265
l|230,993 130,1275 118,1335
l|75,960 110,1015 85,1100
s|170,975 150,990 130,1030 100,1100|1|4 2
l|122,1343 136,1343 136,1357 122,1357 122,1343`},
 {x:1630, y:0, ink:'#a6a6a6', lines:`
s|315,205 330,180 345,150 380,130 435,120 550,119 620,128 690,137 740,135 770,128 797,115
s|25,400 28,360 50,320 120,262 210,228 285,227
s|343,222 395,209 440,218 520,245 620,268 720,280 770,275 797,260
s|32,355 70,350 130,305 190,275 240,267 285,258
s|340,255 405,236 450,248 540,282 640,300 720,303 797,303
s|40,428 100,375 160,315 210,290 260,287 300,270 340,255
s|25,400 30,430 50,485
l|50,485 22,485
l|22,497 35,485
s|50,475 100,430 170,350 220,330 270,318 330,293 370,290 430,294 500,312 600,335 680,343 797,341
s|22,550 60,540 85,510 110,460 190,375 270,345 340,325 430,325 500,345 570,368 640,373 720,367 797,365
s|22,575 70,570 110,530 150,460 200,405 280,375 360,357 430,357 500,383 580,392 797,393
s|22,612 60,597 110,592 150,555 200,490 270,430 340,407 400,400 470,405 620,404 700,412 797,428
s|22,638 90,640 140,620 190,550 260,485 340,450 430,435 470,437 560,425 680,427 740,432 797,448
s|45,790 48,672 100,660 140,645 180,600 240,540 330,480 410,465 470,465 540,452 640,448 720,455 797,470
s|45,810 80,775 85,700 130,675 180,635 260,590 340,525 410,495 470,495 540,480 620,472 700,477 797,500
s|72,870 75,830 150,775 185,695 220,677 260,705 283,700 277,640 300,590 370,545 430,520 500,515 570,498 640,500 797,525
s|240,1000 245,900 260,835 310,745 320,670 330,610 370,577 440,560 500,545 570,532 640,535 720,552 797,552
s|395,1165 385,1110 410,1035 390,940 365,840 350,720 350,650 380,610 440,590 520,572 600,570 700,585 797,595
s|512,1210 508,1140 445,1035 420,900 385,770 380,690 400,635 440,612 530,600 600,603 700,630 797,628
s|530,1210 525,1160 490,1070 475,940 445,820 415,720 425,665 480,627 570,628 640,640 720,658 797,665
s|508,1080 498,1060 510,995 490,890 485,810 470,730 475,680 530,662 560,672 640,685 730,683 797,703
s|540,672 530,697 508,712 500,780 490,830
s|45,825 46,865 70,882 120,900 170,930 205,970 240,1003 270,1008 300,1000 335,1020 350,1060 350,1105 365,1155 410,1190 500,1212 600,1240 700,1270 740,1272 797,1258|5
l|22,790 40,822|4
l|22,835 50,822
s|772,80 752,145 770,210 775,290 785,350 797,380|4
s|22,925 60,955 100,995 125,1015|2
s|22,885 60,905 100,943 170,955 240,1000
s|35,932 100,965 200,1010 340,1083
l|125,1015 118,1033
l|22,987 62,990 55,1020 125,1035 280,1150 320,1140 362,1142
l|22,997 40,997 33,1030
l|125,1042 283,1162 320,1153 360,1150
l|155,1030 315,1137
l|155,1035 255,1110
l|22,1030 102,1043 68,1175 22,1165
s|122,1040 92,1150 95,1215 157,1272
l|157,1272 110,1332
l|67,1220 133,1277 107,1312 40,1255 67,1220
l|282,1168 137,1342|2
l|275,1178 137,1342|6|1 16
l|440,1212 475,1238 258,1463 155,1380 45,1285 22,1285
l|258,1463 410,1335 435,1288
s|435,1288 400,1370 330,1440 258,1463
s|258,1463 258,1520 275,1568
s|505,1220 506,1280 460,1355 370,1410 312,1480 335,1530 370,1568
s|430,1310 375,1400 352,1480 370,1530 400,1568
s|740,1280 660,1310 560,1350 470,1380 410,1440 405,1500 440,1568
s|797,1312 700,1360 570,1400 510,1435 487,1500 497,1568
s|797,1400 700,1445 600,1475 570,1510 585,1568
s|797,957 720,1025 640,1080 565,1165 557,1220
s|22,1338 80,1350 130,1390 147,1430 120,1470 60,1500 50,1530 90,1568
s|22,1365 80,1380 107,1420 100,1465 60,1480 22,1490
s|155,1380 185,1430 170,1475 90,1500 85,1530 110,1557 220,1565
s|22,1555 40,1568`},
 {x:1630, y:540, ink:'#a0a0a0', lines:`
s|85,0 170,40 250,90 290,140 285,170 250,175 200,150 120,70 22,25
s|22,57 90,75 150,110 195,133 225,130 222,105 150,70 100,35 22,0
s|22,110 60,105 110,125 170,160 250,180 310,210 370,270 440,300 530,325 535,290 515,230 530,200 560,170 540,130 470,80 430,30 365,0
s|22,147 90,148 170,165 280,190 350,260 430,310 500,335 575,358 570,300 555,240 600,185 590,140 520,90 460,40 400,0
s|22,230 50,180 70,170 110,190 200,198 280,225 350,280 430,320 500,345 615,400 620,350 590,270 640,200 640,150 560,100 490,50 450,0
s|22,395 60,350 40,250 50,215 90,207 140,233 220,240 290,285 320,305 350,300 400,325 460,323
s|90,370 75,260 100,247 150,265 220,315 290,335 340,360 375,345 420,365 480,378 560,420 630,440 660,400 655,330 640,260 680,195 670,150 590,90 530,50 500,0
s|300,468 350,437 420,425 500,435 600,475 680,495 715,470 720,400 700,300 720,230 755,170 740,110 680,60 590,0
s|465,292 420,270 370,220 372,195 408,170 390,130 300,70 220,0
s|275,0 330,70 430,115 500,170 485,220 485,285 465,292
l|22,517 100,430
s|22,537 80,505 130,445 150,430
s|22,580 80,545 130,510 200,493
s|22,612 100,570 160,553 225,570
s|214,895 191,939 168,895 191,851 214,895
s|195,995 150,950 125,900 145,850 150,800 175,790 215,815 255,810 245,860 225,900 225,945
s|190,1060 170,1000 120,960 100,890 110,800 140,750 170,755 215,790 260,775 290,830
s|185,1030 165,990 100,950 80,880 90,780 120,725 160,712 200,730 250,770 280,780 300,820
s|185,1030 140,985 70,950 45,890 65,820 65,740 90,690 160,685 220,715 260,750 300,800
s|75,700 100,650 140,630 175,618 200,640 205,680 270,738 305,742 312,775
s|135,1020 50,970 25,920 35,840 30,740 75,700
s|367,693 330,760 290,830 240,920 200,990 190,1060 220,1130 280,1220 320,1310 400,1410 465,1490
l|465,1490 487,1468
s|487,1468 430,1415 380,1350 367,1300
l|367,1300 402,1183 427,1190 405,1290 418,1293 447,1185
s|367,693 400,665 480,635 600,607 707,597
s|770,585 790,615 785,645 750,657 670,650 560,660 470,678 400,715
s|400,715 370,770 290,920 225,1040 230,1065 247,1065 237,1035
l|400,735 237,1035
l|430,693 437,708
s|437,708 480,700 540,697 590,715 640,750 700,755 797,768
l|342,848 370,857 385,840 575,920 457,1185 420,1175 437,1132
l|400,880 442,897 445,890 525,925 550,925 515,1008 467,985 440,1045 485,1068 450,1142 345,1090 348,1080 317,1065 333,1035 342,1038 362,988 343,980 350,960 370,967 390,918 382,915 400,880
s|385,840 420,810 470,805 510,770 585,748
s|400,735 437,760 490,732 540,727 590,750 655,805
l|570,915 615,820 660,838
s|650,830 665,800 705,785 797,805
s|797,823 730,803 685,805 655,850 610,940 610,990 630,1015 700,1045 797,1085
l|610,1020 797,1107
l|797,845 775,838 680,870 668,905 680,940 668,970 680,997 712,1003 715,1018 797,990
l|797,1003 755,1022 770,1062 797,1055
l|762,1040 797,1025
l|607,1017 600,990 545,1115 560,1122 607,1017
l|560,1122 472,1310 565,1447 632,1465 797,1190
l|490,1312 535,1335 530,1360 490,1312
l|300,1100 315,1098 403,1142 388,1180 300,1145 292,1130 300,1100
l|418,1293 412,1320 430,1355 490,1405 485,1432 440,1412 445,1388 400,1365 405,1345 378,1330 382,1310 367,1300
s|797,1275 740,1330 715,1390 730,1450 780,1568
s|797,1335 740,1390 745,1440 797,1510
s|797,1365 780,1410 797,1440
s|670,1405 700,1480 745,1568
s|632,1465 660,1520 665,1568
s|645,1455 685,1510 690,1568
s|480,1480 500,1568
s|290,1240 265,1300 270,1360 350,1480 430,1563
l|22,318 85,357|4`}
];
const NS = 'http://www.w3.org/2000/svg', map = document.getElementById('map');
const KX = 1/3, KY = 0.34439;
function add(tag, attrs){const e=document.createElementNS(NS,tag);for(const k in attrs)e.setAttribute(k,attrs[k]);map.appendChild(e);}
function route(pts, smooth){
  const f=n=>n.toFixed(1);
  let d='M'+f(pts[0][0])+' '+f(pts[0][1]);
  for(let i=0;i<pts.length-1;i++){
    const a=pts[i-1]||pts[i],b=pts[i],c=pts[i+1],e=pts[i+2]||c;
    d+=smooth?`C${f(b[0]+(c[0]-a[0])/6)} ${f(b[1]+(c[1]-a[1])/6)} ${f(c[0]-(e[0]-b[0])/6)} ${f(c[1]-(e[1]-b[1])/6)} ${f(c[0])} ${f(c[1])}`:`L${f(c[0])} ${f(c[1])}`;
  }
  return d;
}
const parse=(t,s)=>t.trim().split(' ').map(p=>{const[x,y]=p.split(',').map(Number);return[s.x+x*KX,s.y+y*KY];});
for(const s of sheets) for(const row of s.lines.trim().split('\n')){
  const [kind,t,w,dash]=row.split('|');
  const a={d:route(parse(t,s),kind==='s'),stroke:(+w>=2&&s.x)?'#fff':s.ink,'stroke-width':w||1};
  if(dash)a['stroke-dasharray']=dash;
  add('path',a);
}
// Dense slope contours between two guide lines.
const low=sheets[3];
const g1=parse('22,1000 100,1030 160,1100 230,1160 247,1260 300,1370 430,1563',low);
const g2=parse('22,1300 24,1330 28,1370 34,1410 40,1460 50,1510 62,1568',low);
for(let i=0;i<=15;i++){const t=i/15;add('path',{d:route(g1.map((p,j)=>[p[0]+(g2[j][0]-p[0])*t,p[1]+(g2[j][1]-p[1])*t]),true),stroke:low.ink});}
// River, stairway and the round pond.
add('path',{d:route(parse('22,427 60,405 90,370 100,330 100,303',low),true)+route(parse('100,303 147,297 150,330',low),false).replace('M','L')+route(parse('150,330 190,350 240,400 300,468 360,505 420,520 520,513 600,522 680,547 740,540 780,505 797,440',low),true).replace('M','L')+route(parse('797,565 770,582 740,592 680,583 600,565 520,557 440,572 380,588 330,585 300,560 275,500 230,430 170,408 100,425 22,462',low),true).replace('M','L')+'Z',fill:'#fff'});
add('path',{d:'M1896 620V685L1890 712L1896 735z',fill:'#fff'});
add('path',{d:route(parse('796,240 793,330 796,480',low),false),stroke:'#fff','stroke-width':2});
const stairs=route(parse('150,415 205,450 235,560 250,650 278,703',low),true)+route(parse('278,703 367,693',low),false);
add('path',{d:stairs,stroke:'#fff','stroke-width':7});
add('path',{d:stairs,stroke:'#111','stroke-width':7,'stroke-dasharray':'1 4 1 12'});
add('ellipse',{cx:1734,cy:82,rx:10,ry:11,fill:'#fff'});
add('path',{d:'M1731 70l2 17h2l2-17z',fill:'#000'});
</script>
</body>
</html>
